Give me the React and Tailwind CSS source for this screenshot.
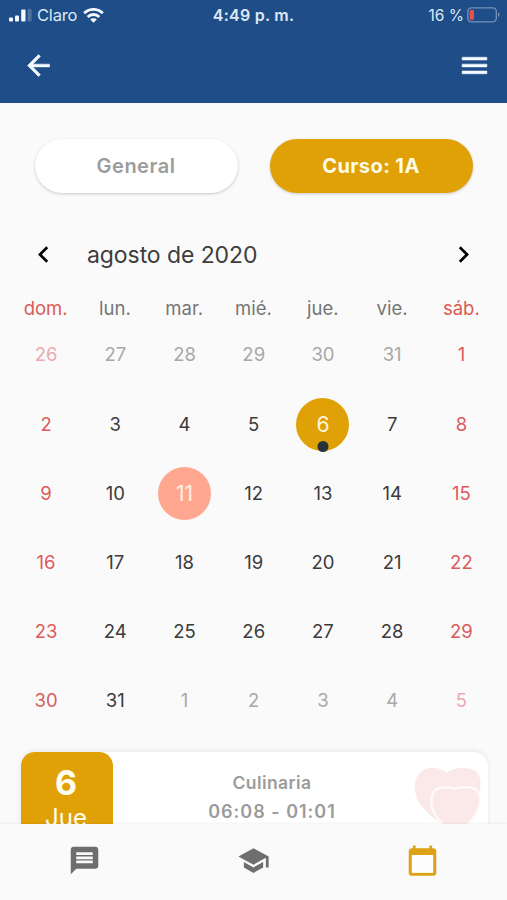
import clsx from "clsx";
import { MdChevronLeft, MdChevronRight, MdMessage } from "react-icons/md";

const diasSemana = ["dom.", "lun.", "mar.", "mié.", "jue.", "vie.", "sáb."];

// 26 de julio al 5 de septiembre
const dias = [
  ...[26, 27, 28, 29, 30, 31].map((n) => ({ n, fuera: true })),
  ...Array.from({ length: 31 }, (_, i) => ({ n: i + 1, fuera: false })),
  ...[1, 2, 3, 4, 5].map((n) => ({ n, fuera: true })),
];

function StatusBar() {
  return (
    <div className="relative flex h-[30px] items-center justify-between pl-[9px] pr-[7px] text-[#dce8f5]">
      <div className="flex items-center">
        <svg className="h-[13px] w-[24px]" viewBox="0 0 24 13" fill="#f4f9ff">
          <rect x="0" y="8.5" width="4" height="4" rx="1" />
          <rect x="6" y="6.5" width="4" height="6" rx="1" />
          <rect x="12.2" y="0.5" width="4.3" height="12" rx="1" />
          <rect x="18.6" y="0" width="4" height="12.5" rx="1" opacity="0.22" />
        </svg>
        <span className="ml-1 text-[16.5px] leading-none tracking-[-0.2px]">Claro</span>
        <svg className="ml-[6px] h-[15px] w-[21px]" viewBox="0 0 21 15" fill="none" stroke="#f4f9ff" strokeWidth="2.8">
          <path d="M1.2 5.2a13.2 13.2 0 0 1 18.6 0" />
          <path d="M4.7 8.9a8.2 8.2 0 0 1 11.6 0" />
          <path d="M7.2 11.5a4.7 4.7 0 0 1 6.6 0L10.5 14.8z" fill="#f4f9ff" stroke="none" />
        </svg>
      </div>
      <span className="absolute left-1/2 -translate-x-1/2 text-[16px] font-semibold leading-none tracking-[0.25px] whitespace-nowrap">
        4:49 p. m.
      </span>
      <div className="flex items-center">
        <span className="pt-px text-[15.5px] leading-none">16 %</span>
        <svg className="ml-[3px] h-[17px] w-[33px]" viewBox="0 0 33 17" fill="none">
          <rect x="0.8" y="0.8" width="28.5" height="14" rx="3.6" stroke="#7592ba" strokeWidth="1.3" />
          <rect x="2.6" y="2.9" width="4.4" height="9.8" rx="1.2" fill="#e8504c" />
          <path d="M31 5.5v4.5q1.6-.7 1.6-2.2T31 5.5z" fill="#7592ba" />
        </svg>
      </div>
    </div>
  );
}

function Dia({ dia, col }) {
  const finde = col === 0 || col === 6;
  const elegido = !dia.fuera && dia.n === 6;
  const hoy = !dia.fuera && dia.n === 11;

  return (
    <div className="flex h-[69.2px] items-center justify-center">
      <div
        className={clsx(
          "relative flex size-[53px] items-center justify-center rounded-full",
          elegido && "bg-[#e0a106] text-[21px] text-[#fff8dc]",
          hoy && "bg-[#ffa88f] text-[21px] text-[#fff0e4]",
          !elegido && !hoy && "text-[18.5px]",
          !elegido && !hoy && finde && (dia.fuera ? "text-[#eba9b1]" : "text-[#dc5a5a]"),
          !elegido && !hoy && !finde && (dia.fuera ? "text-[#a8a8a8]" : "text-[#3b3b3b]")
        )}
      >
        {dia.n}
        {elegido && (
          <span className="absolute bottom-[-1px] left-1/2 size-[11px] -translate-x-1/2 rounded-full bg-[#263238]" />
        )}
      </div>
    </div>
  );
}

function Corazones() {
  return (
    <svg className="absolute right-[7px] top-[16px] h-[66px] w-[68px]" viewBox="0 0 68 66" fill="#fbe9e9">
      <path d="M34 5C40-1 54-1 61 2c7 5 8 14 5 23C60 40 47 52 36 61 22 52 9 42 4 30 0 20 1 9 9 3c7-5 19-4 25 2z" />
      <path
        d="M42 20.5C48 19 59 18 63 22c5 5 5 13 1.500 20.500C61 50 57 56 46 66H40C30 58 24 51 20.500 43.500 17 36 18 26 23 21.500 27 18.500 36 19 42 20.5z"
        stroke="#fffafa"
        strokeWidth="2.2"
      />
    </svg>
  );
}

function IconoVolver() {
  return (
    <svg className="size-[33px]" viewBox="0 0 24 24" fill="currentColor" stroke="currentColor" strokeWidth="0.4">
      <path d="M20 11H7.830l5.590-5.590L12 4l-8 8 8 8 1.410-1.410L7.830 13H20v-2z" />
    </svg>
  );
}

function IconoMenu() {
  return (
    <svg className="size-[33px]" viewBox="0 0 24 24" fill="currentColor" stroke="currentColor" strokeWidth="0.4">
      <path d="M3 18h18v-2H3v2zm0-5h18v-2H3v2zm0-7v2h18V6H3z" />
    </svg>
  );
}

function IconoEscuela() {
  return (
    <svg className="size-[33px]" viewBox="0 0 24 24" fill="currentColor">
      <path d="M5 13.180v4L12 21l7-3.820v-4L12 17l-7-3.820z" />
      <path d="M12 3L1 9l11 6 9-4.910V17h2V9L12 3z" />
    </svg>
  );
}

function IconoCalendario() {
  return (
    <svg className="size-[33px]" viewBox="0 0 24 24" fill="#dda114">
      <path d="M20 3h-1V1h-2v2H7V1H5v2H4c-1.100 0-2 .9-2 2v16c0 1.100.9 2 2 2h16c1.100 0 2-.9 2-2V5c0-1.100-.9-2-2-2z" />
      <path d="M4.200 8h15.600v13H4.200z" fill="#fdfdfd" />
    </svg>
  );
}

export default function App() {
  return (
    <div className="flex h-[900px] w-[507px] flex-col overflow-hidden bg-[#fafafa] font-['Inter',sans-serif]">
      <header className="h-[103px] shrink-0 bg-[#1e4d87]">
        <StatusBar />
        <div className="flex h-[71px] items-center justify-between pl-[22px] pr-[16px] text-[#f4faff]">
          <IconoVolver />
          <IconoMenu />
        </div>
      </header>

      <main className="flex min-h-0 flex-1 flex-col overflow-hidden">
        <div className="mt-[36px] flex shrink-0 justify-between px-[34.5px]">
          <button className="h-[54px] w-[203px] rounded-full bg-white text-[20px] font-semibold tracking-[0.5px] text-[#9c9c9c] shadow-[0_1px_3px_rgba(0,0,0,0.2)]">
            General
          </button>
          <button className="h-[54px] w-[203px] rounded-full bg-[#e0a106] text-[20px] font-bold tracking-[0.4px] text-[#fffbea] shadow-[0_1px_3px_rgba(0,0,0,0.2)]">
            Curso: 1A
          </button>
        </div>

        <div className="mt-[45px] flex h-[33px] shrink-0 items-center px-[27px] text-[33px] text-black">
          <MdChevronLeft />
          <h1 className="ml-[27px] flex-1 pt-px text-[23px] leading-none tracking-[-0.08px] text-[#3d3d3d]">
            agosto de 2020
          </h1>
          <MdChevronRight />
        </div>

        <div className="mt-[25px] grid shrink-0 grid-cols-7 px-[11px] text-center text-[18.5px] leading-[24px]">
          {diasSemana.map((d, i) => (
            <span key={d} className={i === 0 || i === 6 ? "text-[#dc5a55]" : "text-[#757575]"}>
              {d}
            </span>
          ))}
        </div>

        <div className="mt-[0.6px] grid shrink-0 grid-cols-7 pl-[11.5px] pr-[11px]">
          {dias.map((dia, i) => (
            <Dia key={i} dia={dia} col={i % 7} />
          ))}
        </div>

        <div className="relative ml-[21px] mr-[19px] mt-[16.4px] flex h-[110px] shrink-0 rounded-[14px] bg-white shadow-[0_-1px_5px_rgba(0,0,0,0.09)]">
          <div className="flex w-[92px] flex-col items-center rounded-[14px] bg-[#e0a106] pr-[2px] pt-[12px] text-[#fffdf0]">
            <span className="text-[34px] font-bold leading-[37px]">6</span>
            <span className="text-[24px] leading-[34px]">Jue</span>
          </div>
          <div className="flex w-[318px] flex-col items-center pt-[16px] font-semibold text-[#9b9b9b]">
            <span className="text-[17.5px] leading-[29px] tracking-[0.4px]">Culinaria</span>
            <span className="text-[18px] leading-[29px] tracking-[1px]">06:08 - 01:01</span>
          </div>
          <Corazones />
        </div>
      </main>

      <nav className="relative flex h-[76px] shrink-0 items-start justify-around bg-[#fafafa] pt-[20px] text-[#6e6e6e] shadow-[0_-1px_2px_rgba(0,0,0,0.05)]">
        <MdMessage className="size-[33px]" />
        <IconoEscuela />
        <IconoCalendario />
      </nav>
    </div>
  );
}
